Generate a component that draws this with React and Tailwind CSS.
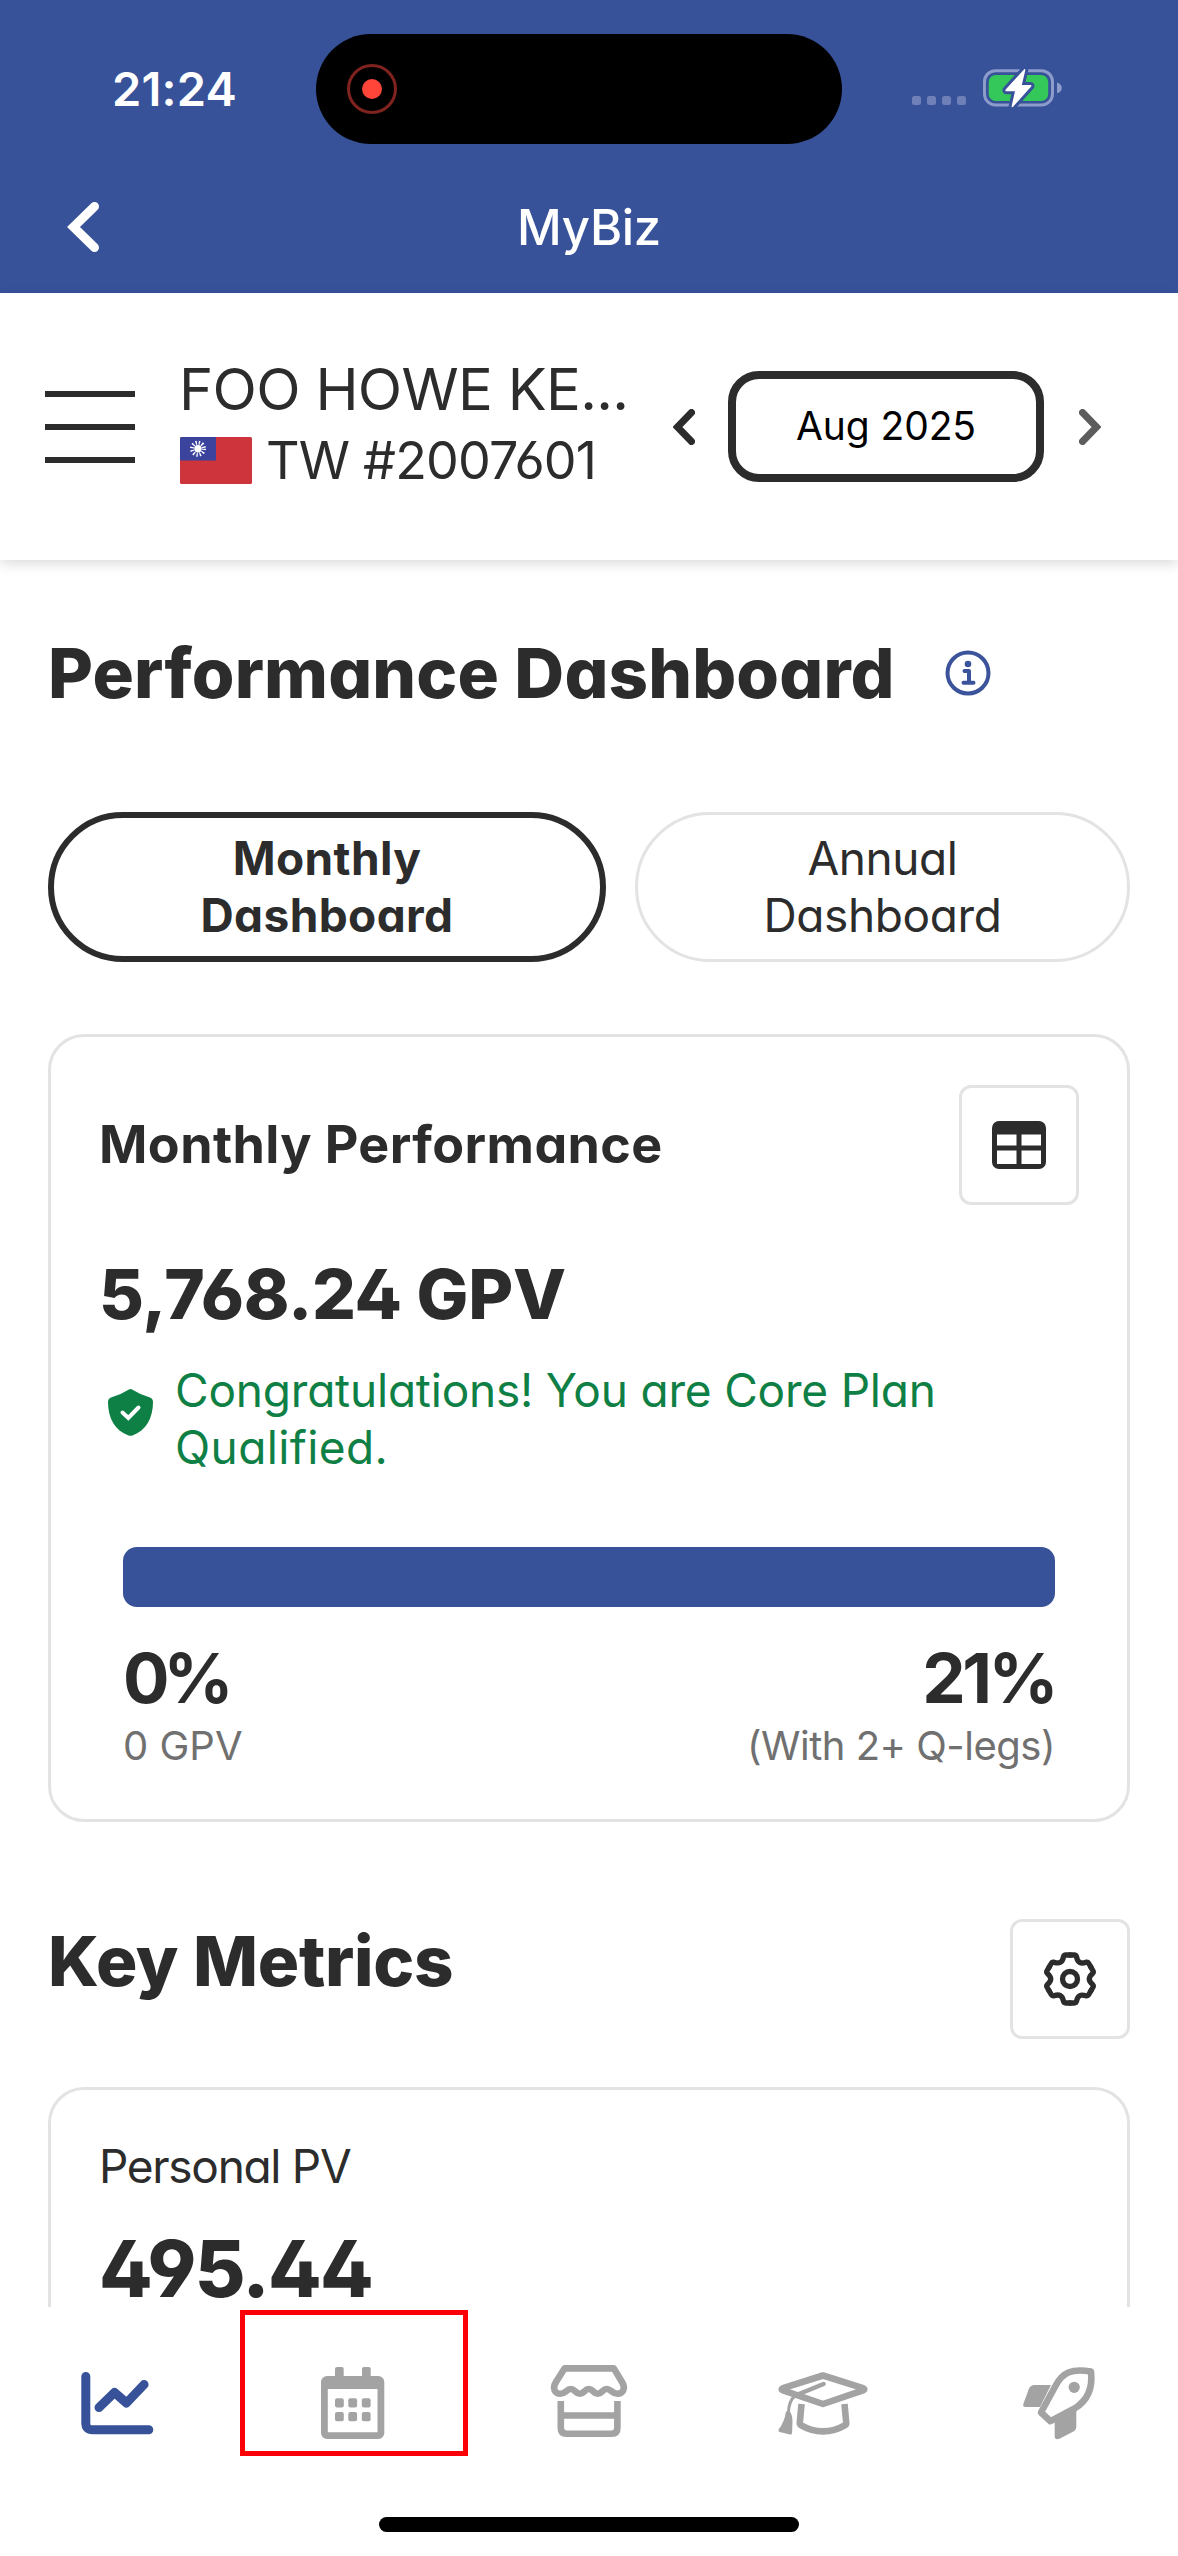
const GEAR_TURNS = [0, 60, 120, 180, 240, 300];

function BatteryIcon() {
  return (
    <svg className="ml-[17px] h-[50px] w-[80px]" viewBox="0 0 80 50" fill="none">
      <rect x="1.5" y="6.7" width="68" height="34.3" rx="11" stroke="#8d9ccb" strokeWidth="3" />
      <path d="M74 18.5c3.2 1.2 4.8 3 4.8 5.4s-1.6 4.2-4.8 5.4z" fill="#8d9ccb" />
      <rect x="5.7" y="11" width="59.5" height="26" rx="7" fill="#34c759" />
      <path
        d="M41 5.4 22.7 25.6c-.6.8-.3 1.7.8 1.7H32l-3.4 15c-.2 1 .9 1.2 1.5.4L48.2 22.6c.6-.8.3-1.7-.8-1.7H38.8L42.3 6.2c.2-.9-.7-1.5-1.3-.8z"
        fill="#fff"
        stroke="#375299"
        strokeWidth="6"
        strokeLinejoin="round"
        paintOrder="stroke"
      />
    </svg>
  );
}

function StatusBar() {
  return (
    <div className="flex h-[177px] items-center pl-[112px]">
      <div className="w-[204px] text-[47px] leading-none font-semibold tracking-[0.2px]">21:24</div>
      <div className="flex h-[110px] w-[526px] items-center rounded-full bg-black pl-[31px]">
        <div className="flex size-[50px] items-center justify-center rounded-full border-[3.5px] border-[#7f231f]">
          <div className="size-5 rounded-full bg-[#ff453a]" />
        </div>
      </div>
      <div className="mt-6 ml-[70px] flex gap-1.5">
        <span className="size-[9px] rounded-[2.5px] bg-[#6f80b8]" />
        <span className="size-[9px] rounded-[2.5px] bg-[#6f80b8]" />
        <span className="size-[9px] rounded-[2.5px] bg-[#6f80b8]" />
        <span className="size-[9px] rounded-[2.5px] bg-[#6f80b8]" />
      </div>
      <BatteryIcon />
    </div>
  );
}

function TitleBar() {
  return (
    <div className="grid h-[100px] grid-cols-3 items-center">
      <svg className="ml-[65px] h-[52px] w-9" viewBox="0 0 36 52" fill="none">
        <path d="M29.5 5.5 8.5 26l21 20.5" stroke="#fff" strokeWidth="9" strokeLinecap="round" strokeLinejoin="miter" />
      </svg>
      <div className="text-center text-[49px] leading-none font-medium tracking-[-0.3px]">MyBiz</div>
    </div>
  );
}

function Flag() {
  return (
    <svg className="h-[47px] w-[72px]" viewBox="0 0 72 47">
      <rect width="72" height="47" rx="1.5" fill="#cd343b" />
      <path d="M1.5 0H36v23.5H0v-22A1.5 1.5 0 0 1 1.5 0z" fill="#3c439c" />
      <circle cx="18" cy="11.7" r="6" fill="none" stroke="#fff" strokeWidth="4" strokeDasharray="1.3 1.842" />
      <circle cx="18" cy="11.7" r="3.7" fill="#fff" />
    </svg>
  );
}

function AccountBar() {
  return (
    <div className="relative z-10 flex h-[267px] items-center bg-white pl-[45px] shadow-[0_4px_12px_rgba(0,0,0,0.14)]">
      <div className="flex w-[90px] flex-col gap-[27px]">
        <span className="h-1.5 bg-[#2c2c2c]" />
        <span className="h-1.5 bg-[#2c2c2c]" />
        <span className="h-1.5 bg-[#2c2c2c]" />
      </div>
      <div className="-mt-[3px] ml-[45px] w-[448px] leading-[71px] whitespace-nowrap">
        <div className="-ml-px text-[58px] tracking-[-0.7px]">FOO HOWE KE...</div>
        <div className="flex items-center gap-3.5">
          <Flag />
          <span className="text-[52px] tracking-[-0.8px]">TW #2007601</span>
        </div>
      </div>
      <svg className="ml-[45px] h-9 w-[22px]" viewBox="0 0 22 36" fill="none">
        <path d="M18.5 3.5 4.5 18l14 14.5" stroke="#2c2c2c" strokeWidth="7" strokeLinecap="round" />
      </svg>
      <div className="ml-[33px] flex h-[111px] w-[316px] items-center justify-center rounded-[31px] border-8 border-[#2c2c2c] text-[39px] tracking-[-0.1px] text-black">
        Aug 2025
      </div>
      <svg className="ml-[35px] h-9 w-[22px]" viewBox="0 0 22 36" fill="none">
        <path d="M3.5 3.5 17.5 18l-14 14.5" stroke="#5c5c5c" strokeWidth="7" strokeLinecap="round" />
      </svg>
    </div>
  );
}

function InfoIcon() {
  return (
    <svg className="size-[46px]" viewBox="0 0 46 46" fill="none" stroke="#3a539b">
      <circle cx="23" cy="23" r="20.5" strokeWidth="4" />
      <circle cx="23" cy="14" r="3.3" fill="#3a539b" stroke="none" />
      <path d="M19.5 21H24v11.5M18.5 32.7h10" strokeWidth="4" strokeLinecap="round" strokeLinejoin="round" />
    </svg>
  );
}

function TableIcon() {
  return (
    <svg className="h-12 w-[54px]" viewBox="0 0 54 48">
      <path
        fillRule="evenodd"
        fill="#2c2c2c"
        d="M7 0h40a7 7 0 0 1 7 7v34a7 7 0 0 1-7 7H7a7 7 0 0 1-7-7V7a7 7 0 0 1 7-7zM5 13.5v11h19.5v-11zM29.5 13.5v11H49v-11zM5 29.5V43h19.5V29.5zM29.5 29.5V43H49V29.5z"
      />
    </svg>
  );
}

function GearIcon() {
  return (
    <svg className="h-[54px] w-[54px]" viewBox="-81 -81 162 162" fill="none" stroke="#2c2c2c" strokeWidth="16" strokeLinecap="round">
      <circle r="22.5" />
      {GEAR_TURNS.map((turn) => (
        <path
          key={turn}
          transform={`rotate(${turn})`}
          d="M0 -72H13Q18 -72 19.5 -67Q22 -54 29 -50Q35.8 -46 48.3 -50.4Q53.4 -51.6 55.9 -47.3L62.4 -36"
        />
      ))}
    </svg>
  );
}

function ShieldIcon() {
  return (
    <svg className="mt-[27px] h-[47px] w-[45px] shrink-0" viewBox="0 0 45 47" fill="none">
      <path d="M20.5.7q2-1.2 4 0Q32 5.5 42 8.5q3 1 3 4.5C45 29 38 42 24.5 46.4q-2 .8-4 0C7 42 0 29 0 13q0-3.5 3-4.5Q13 5.5 20.5.7z" fill="#0f8045" />
      <path d="m14.5 23.5 5.8 5.5 10.2-10.5" stroke="#fff" strokeWidth="4" strokeLinecap="round" />
    </svg>
  );
}

function SquareButton({ children }) {
  return (
    <button className="flex size-[120px] items-center justify-center rounded-[12px] border-[3px] border-[#e3e3e3] bg-white">
      {children}
    </button>
  );
}

function Tabs() {
  return (
    <div className="mt-[97px] flex gap-[29px] text-center text-[46px] leading-[57px]">
      <button className="h-[150px] w-[558px] rounded-full border-[6px] border-[#2c2c2c] font-bold tracking-[0.4px]">
        Monthly
        <br />
        Dashboard
      </button>
      <button className="h-[150px] w-[495px] rounded-full border-[3px] border-[#e3e3e3] tracking-[-0.4px]">
        Annual
        <br />
        Dashboard
      </button>
    </div>
  );
}

function MonthlyCard() {
  return (
    <section className="mt-[72px] h-[788px] rounded-[36px] border-[3px] border-[#e3e3e3] px-12 pt-12">
      <div className="flex items-center justify-between">
        <h2 className="text-[52px] leading-[60px] font-bold tracking-[0.4px]">Monthly Performance</h2>
        <SquareButton>
          <TableIcon />
        </SquareButton>
      </div>
      <div className="mt-[47px] text-[69px] leading-[84px] font-extrabold tracking-[-0.3px]">5,768.24 GPV</div>
      <div className="mt-[26px] flex pl-[9px]">
        <ShieldIcon />
        <p className="ml-[22px] w-[780px] text-[46px] leading-[57px] tracking-[-0.2px] text-[#0f8045]">
          Congratulations! You are Core Plan <span className="tracking-[0.4px]">Qualified.</span>
        </p>
      </div>
      <div className="mx-6 mt-[71px] h-[60px] rounded-[14px] bg-[#375299]" />
      <div className="mx-6 mt-[29px] flex justify-between">
        <div>
          <div className="text-[69px] leading-[84px] font-bold tracking-[-6px]">0%</div>
          <div className="mt-0.5 text-[40px] leading-[48px] text-[#707070]">0 GPV</div>
        </div>
        <div className="text-right">
          <div className="text-[69px] leading-[84px] font-bold tracking-[-3.5px]">21%</div>
          <div className="mt-0.5 text-[40px] leading-[48px] tracking-[-0.5px] text-[#707070]">(With 2+ Q-legs)</div>
        </div>
      </div>
    </section>
  );
}

function ChartNavIcon() {
  return (
    <svg className="size-20" viewBox="0 0 80 80" fill="none" stroke="#375299" strokeWidth="9" strokeLinecap="round" strokeLinejoin="round">
      <path d="M7.8 13.5V60q0 6.8 6.8 6.8h56.2" />
      <path d="m21 44.5 15.5-15 12 10.5 17.6-18.5" />
    </svg>
  );
}

function CalendarNavIcon() {
  return (
    <svg className="size-20" viewBox="0 0 80 80" fill="#a3a3a3">
      <path fillRule="evenodd" d="M14 13h51.3a6 6 0 0 1 6 6v51a6 6 0 0 1-6 6H14a6 6 0 0 1-6-6V19a6 6 0 0 1 6-6zm.8 13v43.3h49.7V26z" />
      <path d="M24 4h4.7a2 2 0 0 1 2 2v9H22V6a2 2 0 0 1 2-2zM51 4h4.7a2 2 0 0 1 2 2v9H49V6a2 2 0 0 1 2-2z" />
      <rect x="22" y="35.3" width="8.8" height="9.2" rx="2" />
      <rect x="35.3" y="35.3" width="8.8" height="9.2" rx="2" />
      <rect x="48.8" y="35.3" width="8.8" height="9.2" rx="2" />
      <rect x="22" y="49" width="8.8" height="9.2" rx="2" />
      <rect x="35.3" y="49" width="8.8" height="9.2" rx="2" />
      <rect x="48.8" y="49" width="8.8" height="9.2" rx="2" />
    </svg>
  );
}

function StoreNavIcon() {
  return (
    <svg className="size-20" viewBox="0 0 80 80" fill="none" stroke="#a3a3a3" strokeWidth="6.6">
      <path
        strokeLinejoin="round"
        d="M15.5 5.4H64.8L73.3 19.5C77 26 73.5 30.8 68.6 30.8C63 30.8 62 26 57.8 26C53.5 26 53 30.8 48.7 30.8C44.4 30.8 44 26 39.8 26C35.6 26 35.2 30.8 30.8 30.8C26.5 30.8 26 26 21.7 26C17.5 26 16.5 30.8 11.2 30.8C6.3 30.8 3 26 6.7 19.5Z"
      />
      <path d="M11.8 38v27q0 5.7 5.7 5.7h45.2q5.7 0 5.7-5.7V38M11.8 52.5h56.6" />
    </svg>
  );
}

function SchoolNavIcon() {
  return (
    <svg className="-ml-1 h-20 w-24" viewBox="-3 0 96 80" fill="none" stroke="#a3a3a3" strokeWidth="6.6" strokeLinejoin="round">
      <path d="M45 12.5 85 25.2q2.5 1.1 0 2.2L45 41 5 27.4q-2.5-1.1 0-2.2z" />
      <path d="M23.5 41 21.8 59.5q-.2 2 1.5 2.9 10.2 6 21.7 6t21.7-6q1.7-.9 1.5-2.9L66.5 41" />
      <path d="M45.5 21 17.4 32.5" strokeWidth="4.5" strokeLinecap="round" />
      <path d="M17.4 32.5Q10.5 38 10.5 50" strokeWidth="3" />
      <path d="M8 48.5h3.5q3 2.5 3 10l-.4 11.5q-.2 2-2.2 1.5L1.6 69Q0 68.5.6 66.5 6.5 59 8 48.5z" fill="#a3a3a3" stroke="none" />
    </svg>
  );
}

function RocketNavIcon() {
  return (
    <svg className="size-20" viewBox="0 0 80 80" fill="#a3a3a3">
      <path d="M14.5 22H31L20 44H5.5Q2.5 44 3.3 41L9 25.5Q10.5 22 14.5 22z" />
      <path d="M56.3 46v18q0 2.5-2 4L39.5 75.7q-4.8 1.6-4.8-2.4V56z" />
      <path
        d="M71 8.5C51 5 42.5 10 36 22L21 49.5l9.5 8.7L54.5 45.5C67 38 73 26 71 8.5Z"
        fill="#fff"
        stroke="#a3a3a3"
        strokeWidth="6.6"
        strokeLinejoin="round"
      />
      <circle cx="54.2" cy="24.3" r="5.6" />
    </svg>
  );
}

function BottomNav() {
  return (
    <nav className="flex h-[249px] flex-col items-center bg-white">
      <div className="relative grid w-full grid-cols-5 justify-items-center pt-14">
        <ChartNavIcon />
        <CalendarNavIcon />
        <StoreNavIcon />
        <SchoolNavIcon />
        <RocketNavIcon />
        <div className="absolute top-[3px] left-[240px] h-[146px] w-[228px] border-[5px] border-[#fb0007]" />
      </div>
      <div className="mt-[74px] h-[15px] w-[420px] rounded-full bg-black" />
    </nav>
  );
}

export default function App() {
  return (
    <div className="h-[2556px] w-[1178px] overflow-hidden bg-white font-['Inter',sans-serif] text-[#2c2c2c]">
      <header className="h-[293px] bg-[#375299] text-white">
        <StatusBar />
        <TitleBar />
      </header>
      <div className="[font-feature-settings:'cv11','cv02','cv03','cv04']">
        <AccountBar />
        <main className="h-[1747px] overflow-hidden px-12 pt-[71px]">
          <div className="flex items-center">
            <h1 className="w-[897px] text-[69px] leading-[84px] font-extrabold tracking-[0.15px]">Performance Dashboard</h1>
            <InfoIcon />
          </div>
          <Tabs />
          <MonthlyCard />
          <div className="mt-[97px] flex items-start justify-between">
            <h1 className="text-[69px] leading-[84px] font-extrabold tracking-[-0.3px]">Key Metrics</h1>
            <SquareButton>
              <GearIcon />
            </SquareButton>
          </div>
          <section className="mt-12 h-[400px] rounded-[36px] border-[3px] border-[#e3e3e3] px-12 pt-12">
            <div className="text-[46px] leading-[57px] tracking-[-1.3px]">Personal PV</div>
            <div className="mt-9 text-[78px] leading-[76px] font-extrabold tracking-[-1.7px]">495.44</div>
          </section>
        </main>
      </div>
      <BottomNav />
    </div>
  );
}
